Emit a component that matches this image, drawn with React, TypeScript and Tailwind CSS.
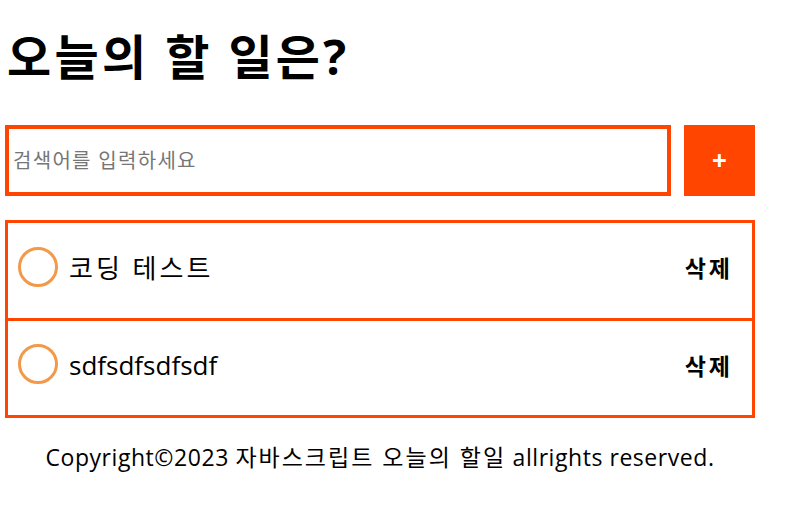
import React from 'react';

const todos = [
  { id: 1, text: '코딩 테스트' },
  { id: 2, text: 'sdfsdfsdfsdf' },
];

// Hangul runs get extra spacing so they sit as wide as the reference font
function Mixed({ text, ko }: { text: string; ko: string }) {
  const parts = text.split(/([가-힣]+(?:\s+[가-힣]+)*)/);
  return (
    <>
      {parts.map((p, i) =>
        /[가-힣]/.test(p) ? (
          <span key={i} className={ko}>
            {p}
          </span>
        ) : (
          <React.Fragment key={i}>{p}</React.Fragment>
        )
      )}
    </>
  );
}

export default function App() {
  return (
    <div className="min-h-screen bg-white text-black font-['Open_Sans','Noto_Sans_CJK_KR',sans-serif]">
      <div className="w-[750px] ml-[5px] pt-[33px]">
        <h1 className="text-[48px] leading-none font-bold pl-[2px] tracking-[3.3px]">오늘의 할 일은?</h1>

        <div className="mt-[44px] flex gap-[13px]">
          <input
            type="text"
            placeholder="검색어를 입력하세요"
            className="flex-1 h-[71px] border-4 border-[#ff4500] pl-[4px] text-[20px] tracking-[1.3px] outline-none placeholder:text-[#767676]"
          />
          <button className="w-[71px] h-[71px] bg-[#ff4500] text-white text-[26px] font-bold flex items-center justify-center">
            +
          </button>
        </div>

        <ul className="mt-[24px] border-[3px] border-[#ff4500]">
          {todos.map((todo, i) => (
            <li
              key={todo.id}
              className={
                'flex items-center pl-[10px] pr-[19px] ' +
                (i > 0 ? 'border-t-[3px] border-[#ff4500] h-[97px]' : 'h-[95px]')
              }
            >
              <span className="w-[40px] h-[40px] mb-[8px] rounded-full border-[3px] border-[#f2994a] shrink-0" />
              <span className="ml-[11px] mb-[6px] text-[26px] leading-none">
                <Mixed text={todo.text} ko="tracking-[3px]" />
              </span>
              <button className="ml-auto mb-[4px] text-[23px] font-bold tracking-[3px]">삭제</button>
            </li>
          ))}
        </ul>

        <p className="mt-[28px] text-center text-[23px] leading-[23px] tracking-[0.55px]">
          <Mixed text="Copyright©2023 자바스크립트 오늘의 할일 allrights reserved." ko="tracking-[2px]" />
        </p>
      </div>
    </div>
  );
}
